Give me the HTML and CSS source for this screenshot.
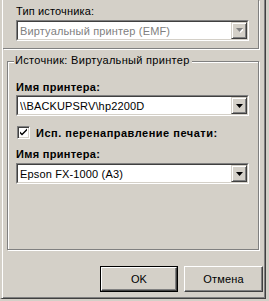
FILE: index.html
```html
<!DOCTYPE html>
<html>
<head>
<meta charset="utf-8">
<link rel="stylesheet" href="styles.css">
</head>
<body>
<div class="window">
  <div class="top">
    <div class="label">Тип источника:</div>
    <div class="combo disabled first">
      <div class="combo-in">
        <span class="value">Виртуальный принтер (EMF)</span>
        <span class="drop"><svg width="7" height="5" viewBox="0 0 7 5"><path d="M1 1h7L4.5 5z" fill="#fff"/><path d="M0 0h7L3.5 4z" fill="#808080"/></svg></span>
      </div>
    </div>
  </div>
  <div class="group">
    <span class="legend">Источник: Виртуальный принтер</span>
    <div class="label bold">Имя принтера:</div>
    <div class="combo">
      <div class="combo-in">
        <span class="value">\\BACKUPSRV\hp2200D</span>
        <span class="drop"><svg width="7" height="4" viewBox="0 0 7 4"><path d="M0 0h7L3.5 4z" fill="#000"/></svg></span>
      </div>
    </div>
    <div class="check-row">
      <span class="check"><svg width="9" height="9" viewBox="0 0 9 9"><path d="M1 3.5l2 2 5-5v2l-5 5-2-2z" fill="#000"/></svg></span>
      <span class="bold wide">Исп. перенаправление печати:</span>
    </div>
    <div class="label bold">Имя принтера:</div>
    <div class="combo last">
      <div class="combo-in">
        <span class="value">Epson FX-1000 (A3)</span>
        <span class="drop"><svg width="7" height="4" viewBox="0 0 7 4"><path d="M0 0h7L3.5 4z" fill="#000"/></svg></span>
      </div>
    </div>
  </div>
  <div class="buttons">
    <div class="btn default"><div class="btn-in">OK</div></div>
    <div class="btn cancel"><div class="btn-in">Отмена</div></div>
  </div>
</div>
</body>
</html>
```
FILE: styles.css
```css
html, body {
  margin: 0;
  padding: 0;
  background: #d4d0c8;
}
body {
  font-family: "Liberation Sans", Arial, sans-serif;
  font-size: 11px;
  letter-spacing: 0.15px;
  color: #000;
}
.window {
  width: 266px;
  height: 299px;
  box-sizing: border-box;
  border-left: 2px solid #d4d0c8;
  border-right: 1px solid #404040;
  border-bottom: 1px solid #404040;
  box-shadow: inset 1px 0 0 #fff, inset -1px -1px 0 #808080;
  padding-left: 1px;
  display: flex;
  flex-direction: column;
}
.top {
  width: 256px;
  height: 49px;
  flex-shrink: 0;
  box-sizing: border-box;
  border-right: 1px solid #808080;
  border-bottom: 1px solid #808080;
  box-shadow: 1px 1px 0 #fff;
  padding: 5px 0 0 13px;
}
.label {
  height: 12px;
  line-height: 12px;
}
.bold { font-weight: bold; letter-spacing: 0.3px; }
.wide { letter-spacing: 0.5px; }
.combo {
  width: 233px;
  height: 21px;
  box-sizing: border-box;
  border: 1px solid;
  border-color: #808080 #fff #fff #808080;
}
.combo.first { margin-top: 3px; }
.combo-in {
  height: 100%;
  box-sizing: border-box;
  border: 1px solid;
  border-color: #404040 #d4d0c8 #d4d0c8 #404040;
  background: #fff;
  display: flex;
  align-items: center;
  padding-left: 2px;
}
.value {
  flex: 1;
  white-space: nowrap;
  overflow: hidden;
}
.disabled .value { color: #808080; }
.drop {
  width: 16px;
  height: 17px;
  box-sizing: border-box;
  background: #d4d0c8;
  border: 1px solid;
  border-color: #d4d0c8 #404040 #404040 #d4d0c8;
  box-shadow: inset 1px 1px 0 #fff, inset -1px -1px 0 #808080;
  display: flex;
  align-items: center;
  justify-content: center;
}
.group {
  position: relative;
  flex-shrink: 0;
  margin: 12px 0 0 4px;
  width: 252px;
  height: 189px;
  box-sizing: border-box;
  border: 1px solid #808080;
  box-shadow: inset 1px 1px 0 #fff, 1px 1px 0 #fff;
  padding: 19px 0 0 8px;
}
.legend {
  position: absolute;
  left: 6px;
  top: -8px;
  padding: 0 2px 0 1px;
  background: #d4d0c8;
  line-height: 13px;
  letter-spacing: 0.3px;
}
.group .combo { margin-top: 2px; }
.group .combo.last { margin-top: 3px; }
.check-row {
  display: flex;
  align-items: center;
  gap: 6px;
  margin: 10px 0 9px 1px;
  height: 13px;
}
.check {
  width: 13px;
  height: 13px;
  box-sizing: border-box;
  border: 1px solid;
  border-color: #808080 #fff #fff #808080;
  box-shadow: inset 1px 1px 0 #404040, inset -1px -1px 0 #d4d0c8;
  background: #fff;
  display: flex;
  align-items: center;
  justify-content: center;
}
.buttons {
  display: flex;
  justify-content: flex-end;
  gap: 6px;
  margin-top: 16px;
  padding-right: 2px;
}
.btn {
  width: 78px;
  height: 26px;
  box-sizing: border-box;
  border: 1px solid;
  border-color: #fff #404040 #404040 #fff;
  box-shadow: inset -1px -1px 0 #808080;
}
.btn.cancel { width: 79px; }
.btn.default {
  border: 1px solid #000;
  box-shadow: none;
}
.btn.default .btn-in {
  border: 1px solid;
  border-color: #fff #404040 #404040 #fff;
  box-shadow: inset -1px -1px 0 #808080;
}
.btn-in {
  height: 100%;
  box-sizing: border-box;
  display: flex;
  align-items: center;
  justify-content: center;
}
```
